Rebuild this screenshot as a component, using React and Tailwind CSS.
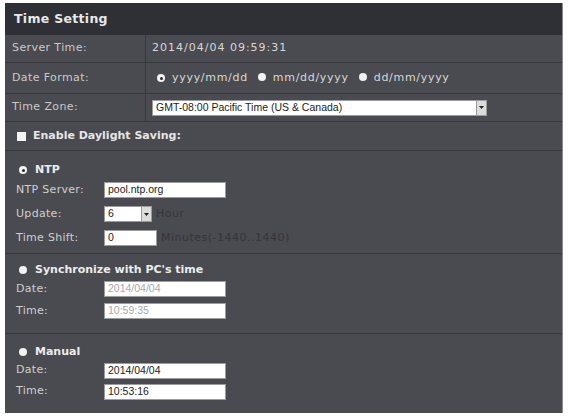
import React from "react";

const font = { fontFamily: '"DejaVu Sans", Verdana, sans-serif' };
const inputFont = { fontFamily: '"Liberation Sans", Arial, sans-serif' };

function Radio({ checked }) {
  return (
    <span className="inline-flex h-[8px] w-[8px] shrink-0 items-center justify-center rounded-full bg-[#f2f2f2]">
      {checked && <span className="h-[3px] w-[3px] rounded-full bg-[#2a2a2a]" />}
    </span>
  );
}

function Arrow() {
  return (
    <span className="flex h-full w-[10px] items-center justify-center border-l border-[#9a9a9a] bg-[#dcdcdc]">
      <svg width="5" height="3" viewBox="0 0 5 3">
        <path d="M0 0h5L2.5 3z" fill="#222" />
      </svg>
    </span>
  );
}

function TextBox({ value, width = "w-[122px]", dim }) {
  return (
    <div
      className={`${width} flex h-[16px] items-center border border-[#9c9c9c] bg-white px-[3px] text-[10.5px] ${
        dim ? "text-[#a8a8a8]" : "text-[#222]"
      }`}
      style={inputFont}
    >
      {value}
    </div>
  );
}

function FieldRow({ label, h, children }) {
  return (
    <div className={`flex items-center ${h}`}>
      <div className="w-[88px] text-[11px] tracking-[0.3px] text-[#cfcfcf]">{label}</div>
      {children}
    </div>
  );
}

function SectionTitle({ checked, title }) {
  return (
    <div className="flex h-[16px] items-center gap-[8px] pl-[3px] text-[11px] font-bold text-[#ececec]">
      <Radio checked={checked} />
      <span>{title}</span>
    </div>
  );
}

export default function App() {
  return (
    <div className="h-[417px] w-[570px] bg-white pl-[5px] pt-[3px]" style={font}>
      <div className="h-[410px] w-[558px] border-r border-[#8a8a8e] bg-[#4a4b50]">
        <div className="flex h-[32px] items-center bg-[#2e3035] px-[9px] text-[12.5px] font-bold tracking-[0.3px] text-[#e8e8e8]">
          Time Setting
        </div>

        <div className="grid grid-cols-[141px_1fr] text-[11px] text-[#c9c9c9]">
          <div className="flex h-[28px] items-center border-r border-b border-[#38393d] pl-[7px] tracking-[0.4px]">Server Time:</div>
          <div className="flex h-[28px] items-center border-b border-[#38393d] pl-[6px] tracking-[1px] text-[#d8d8d8]">
            2014/04/04 09:59:31
          </div>

          <div className="flex h-[31px] items-center border-r border-b border-[#38393d] pl-[7px] tracking-[0.4px]">Date Format:</div>
          <div className="flex h-[31px] items-center border-b border-[#38393d] pl-[11px] tracking-[0.7px] text-[#d8d8d8]">
            <Radio checked />
            <span className="ml-[7px]">yyyy/mm/dd</span>
            <span className="ml-[10px]"><Radio /></span>
            <span className="ml-[7px]">mm/dd/yyyy</span>
            <span className="ml-[10px]"><Radio /></span>
            <span className="ml-[7px]">dd/mm/yyyy</span>
          </div>

          <div className="flex h-[28px] items-center border-r border-b border-[#38393d] pl-[7px] tracking-[0.4px]">Time Zone:</div>
          <div className="flex h-[28px] items-center border-b border-[#38393d] pl-[6px]">
            <div
              className="flex h-[16px] w-[335px] items-center justify-between border border-[#9c9c9c] bg-white text-[10.5px] text-[#222]"
              style={inputFont}
            >
              <span className="pl-[3px]">GMT-08:00 Pacific Time (US &amp; Canada)</span>
              <Arrow />
            </div>
          </div>

          <div className="col-span-2 flex h-[29px] items-center gap-[7px] border-b border-[#38393d] pl-[12px] font-bold text-[#e6e6e6]">
            <span className="h-[9px] w-[9px] bg-[#f4f4f4]" />
            Enable Daylight Saving:
          </div>
        </div>

        <div className="border-b border-[#38393d] pl-[11px] pt-[11px] pb-[3px]">
          <SectionTitle checked title="NTP" />
          <FieldRow label="NTP Server:" h="h-[24px]">
            <TextBox value="pool.ntp.org" />
          </FieldRow>
          <FieldRow label="Update:" h="h-[24px]">
            <div
              className="flex h-[16px] w-[48px] items-center justify-between border border-[#9c9c9c] bg-white text-[10.5px] text-[#222]"
              style={inputFont}
            >
              <span className="pl-[3px]">6</span>
              <Arrow />
            </div>
            <span className="ml-[4px] text-[11px] tracking-[0.5px] text-[#34353a]">Hour</span>
          </FieldRow>
          <FieldRow label="Time Shift:" h="h-[24px]">
            <TextBox value="0" width="w-[53px]" />
            <span className="ml-[4px] text-[11px] tracking-[0.5px] text-[#34353a]">Minutes(-1440..1440)</span>
          </FieldRow>
        </div>

        <div className="border-b border-[#38393d] pl-[11px] pt-[8px] pb-[11px]">
          <SectionTitle title="Synchronize with PC's time" />
          <FieldRow label="Date:" h="h-[22px]">
            <TextBox value="2014/04/04" dim />
          </FieldRow>
          <FieldRow label="Time:" h="h-[22px]">
            <TextBox value="10:59:35" dim />
          </FieldRow>
        </div>

        <div className="pl-[11px] pt-[10px]">
          <SectionTitle title="Manual" />
          <FieldRow label="Date:" h="h-[21px]">
            <TextBox value="2014/04/04" />
          </FieldRow>
          <FieldRow label="Time:" h="h-[21px]">
            <TextBox value="10:53:16" />
          </FieldRow>
        </div>
      </div>
    </div>
  );
}
